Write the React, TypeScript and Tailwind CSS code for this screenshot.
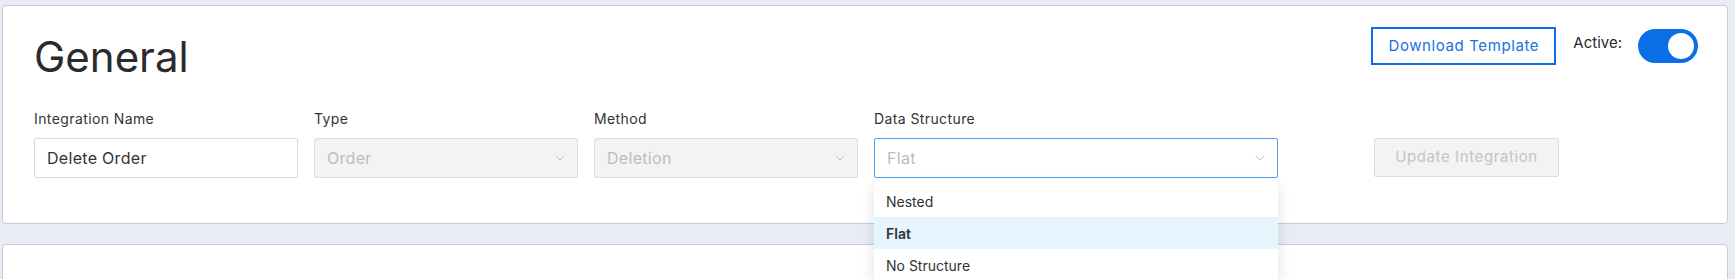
import { useState } from "react";

const font = { fontFamily: "Inter, 'Noto Sans', sans-serif" };

function Chevron() {
  return (
    <svg width="10" height="6" viewBox="0 0 10 6" className="shrink-0">
      <polyline points="0.5,0.5 5,5 9.5,0.5" fill="none" stroke="#c4c4c4" strokeWidth="1" />
    </svg>
  );
}

function Field({
  label,
  width,
  children,
}: {
  label: string;
  width: string;
  children: React.ReactNode;
}) {
  return (
    <div className={`flex flex-col ${width}`}>
      <label className="text-[14px] leading-5 text-[#333] tracking-[0.4px] h-5 mb-[9px]">{label}</label>
      {children}
    </div>
  );
}

function DisabledSelect({ value }: { value: string }) {
  return (
    <div className="flex items-center justify-between h-10 px-3 bg-[#f3f3f3] border border-[#dcdcdc] rounded-[2px] text-[16px] tracking-[0.3px] text-[#bdbdbd]">
      <span>{value}</span>
      <Chevron />
    </div>
  );
}

export default function App() {
  const [active, setActive] = useState(true);
  const options = ["Nested", "Flat", "No Structure"];
  const selected = "Flat";

  return (
    <div className="min-h-[279px] bg-[#e9ecf2] pt-[5px] pl-[2px] pr-[7px]" style={font}>
      <div className="bg-white border border-[#cbc9de] rounded-[4px] pl-[31px] pr-[29px] pt-[21px] pb-[45px]">
        <div className="flex items-start justify-between">
          <h1 className="mt-[8px] text-[42px] leading-[44px] font-normal text-[#2b2b2b]">
            General
          </h1>
          <div className="flex items-start">
            <button className="w-[185px] h-[38px] border-2 border-[#0a6fe6] text-[#1870e0] text-[15px] tracking-[0.6px] bg-white">
              Download Template
            </button>
            <span className="ml-[17px] mt-[6px] text-[15px] leading-5 text-[#2b2b2b]">Active:</span>
            <button
              onClick={() => setActive(!active)}
              className="ml-[16px] mt-[2px] w-[60px] h-[34px] rounded-full bg-[#0a6fe6] flex items-center px-[4px] justify-end"
            >
              <span className="w-[26px] h-[26px] rounded-full bg-white" />
            </button>
          </div>
        </div>

        <div className="flex items-end mt-[30px]">
          <Field label="Integration Name" width="w-[264px]">
            <input
              defaultValue="Delete Order"
              className="h-10 px-3 border border-[#dcdcdc] rounded-[2px] text-[16px] tracking-[0.3px] text-[#333] outline-none"
            />
          </Field>
          <div className="w-4" />
          <Field label="Type" width="w-[264px]">
            <DisabledSelect value="Order" />
          </Field>
          <div className="w-4" />
          <Field label="Method" width="w-[264px]">
            <DisabledSelect value="Deletion" />
          </Field>
          <div className="w-4" />
          <Field label="Data Structure" width="w-[404px]">
            <div className="relative">
              <div className="flex items-center justify-between h-10 px-3 bg-white border border-[#4aa3f2] rounded-[2px] text-[16px] tracking-[0.3px] text-[#bdbdbd]">
                <span>Flat</span>
                <Chevron />
              </div>
              <ul className="absolute left-0 right-0 top-full mt-[3px] py-[4px] bg-white z-10 shadow-[0_4px_14px_rgba(0,0,0,0.12)] rounded-[2px]">
                {options.map((o) => (
                  <li
                    key={o}
                    className={`h-8 flex items-center px-3 text-[14px] text-[#333] ${
                      o === selected ? "bg-[#e6f4fe] font-semibold" : ""
                    }`}
                  >
                    {o}
                  </li>
                ))}
              </ul>
            </div>
          </Field>
          <button className="ml-[96px] w-[185px] h-[39px] bg-[#f3f3f3] border border-[#dcdcdc] rounded-[2px] text-[15px] tracking-[0.6px] text-[#c4c4c4] mb-[1px]">
            Update Integration
          </button>
        </div>
      </div>

      <div className="mt-[20px] h-[60px] bg-white border border-[#cbc9de] rounded-[4px]" />
    </div>
  );
}
